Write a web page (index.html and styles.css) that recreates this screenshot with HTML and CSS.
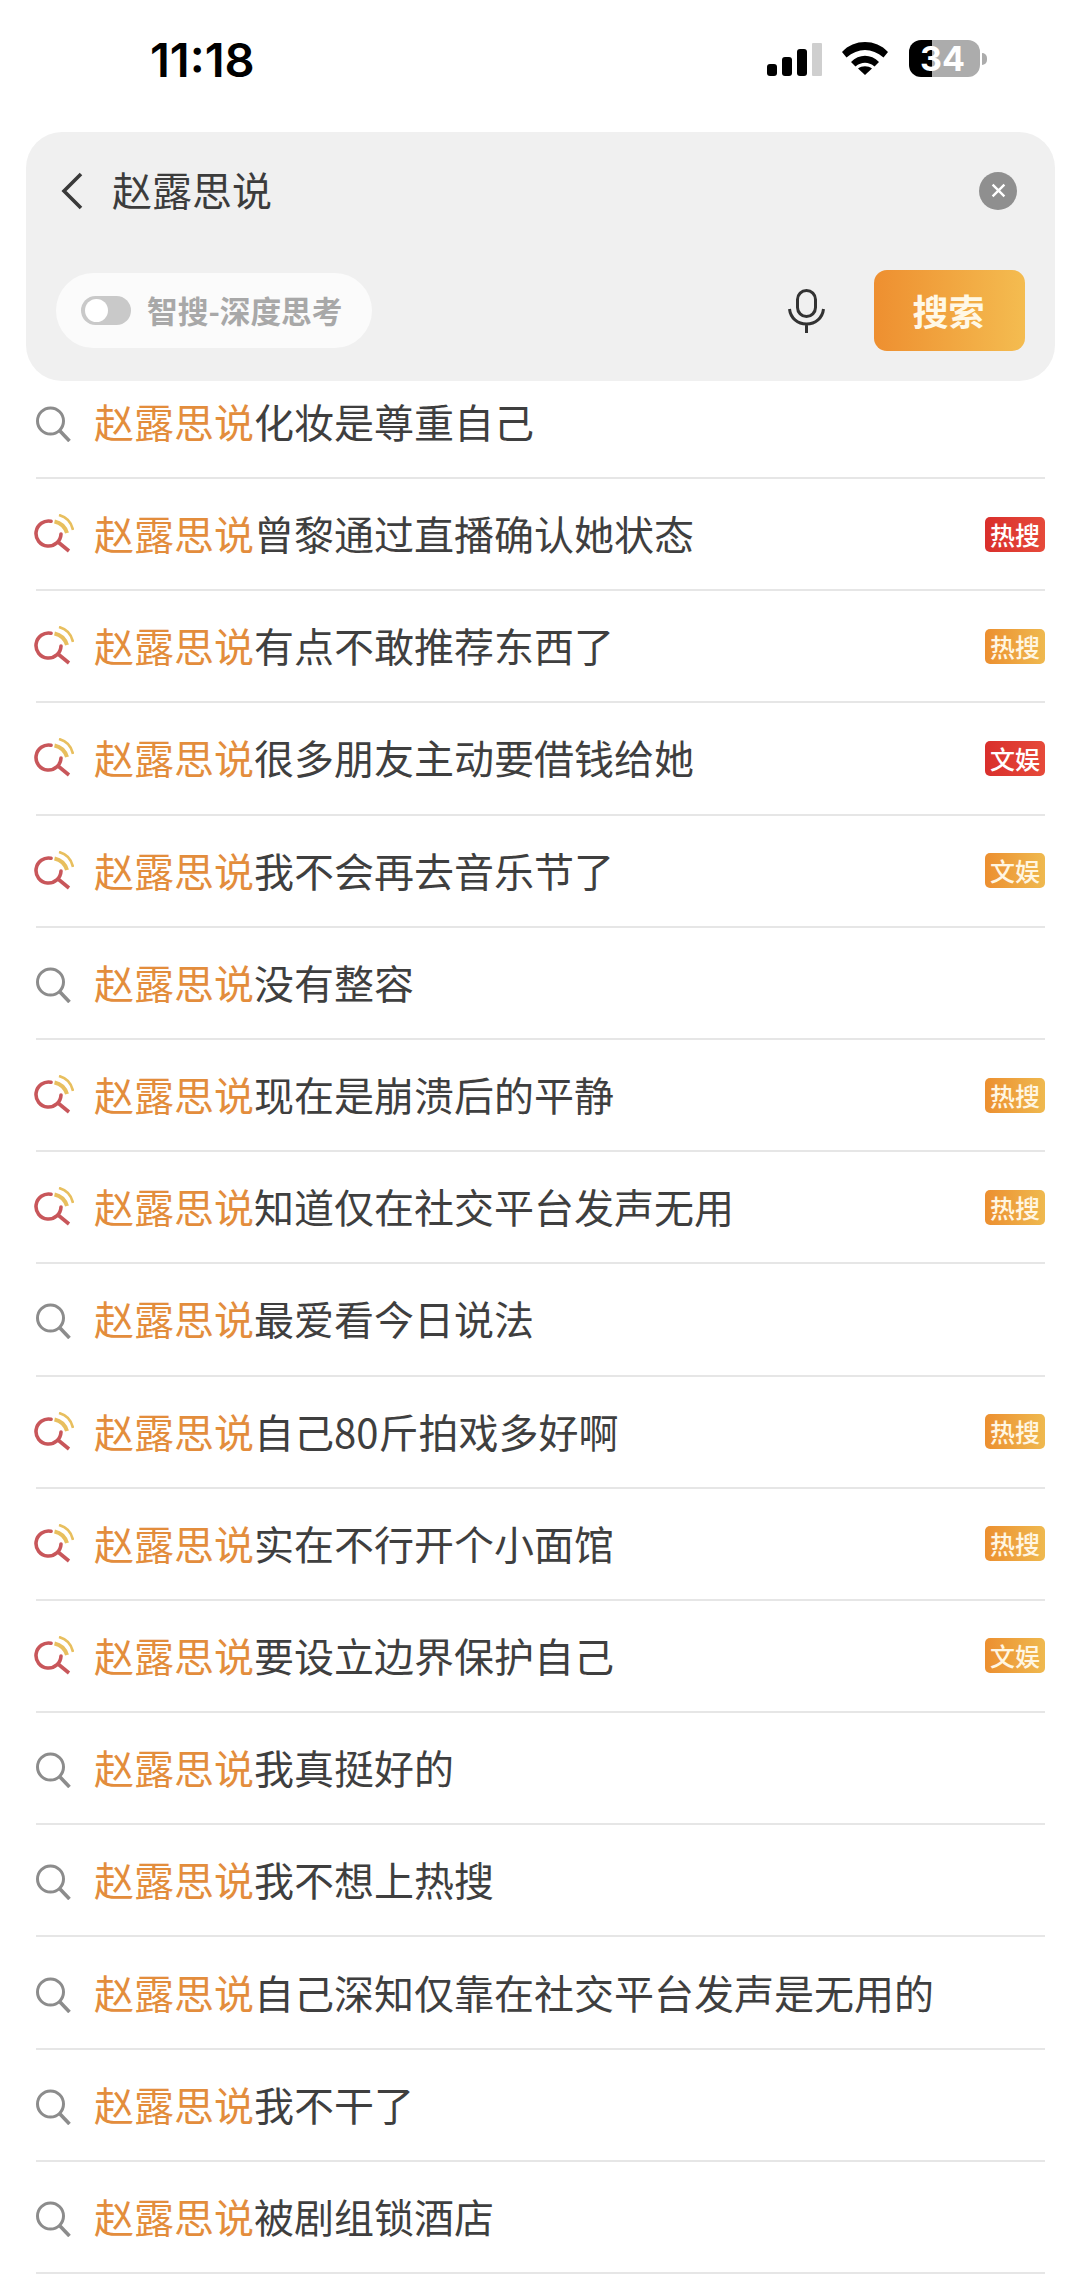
FILE: index.html
```html
<!DOCTYPE html>
<html lang="zh-CN">
<head>
<meta charset="utf-8">
<title>搜索</title>
<link rel="stylesheet" href="styles.css">
</head>
<body>
<svg class="defs" width="0" height="0" aria-hidden="true">
  <symbol id="plain" viewBox="0 0 40 40">
    <circle cx="16.5" cy="19" r="13" fill="none" stroke="#8c8c8c" stroke-width="3"/>
    <path d="M26 29 L35.5 39" fill="none" stroke="#8c8c8c" stroke-width="3.6"/>
  </symbol>
  <symbol id="hot" viewBox="0 0 40 40">
    <path d="M17 7.3 A12.5 12.5 0 1 0 27 20" fill="none" stroke="#c8565a" stroke-width="3.6" stroke-linecap="round"/>
    <path d="M24 28 L35 37" fill="none" stroke="#c8565a" stroke-width="3.6"/>
    <path d="M20.5 7.5 Q30 9.5 33 19" fill="none" stroke="#e8bf5e" stroke-width="4"/>
    <path d="M25 1 Q36.5 4 39 16" fill="none" stroke="#e8bf5e" stroke-width="2.6"/>
  </symbol>
</svg>

<header class="status">
  <span class="time">11:18</span>
  <div class="status-icons">
    <div class="signal"><i class="b1"></i><i class="b2"></i><i class="b3"></i><i class="b4"></i></div>
    <svg class="wifi" viewBox="0 0 46 33" aria-hidden="true">
      <path d="M0 10 C12 -3.3 34 -3.3 46 10 L41.5 15.5 C30 5.5 16 5.5 4.5 15.5 Z" fill="#000"/>
      <path d="M9 20 C17 11.5 29 11.5 37 20 L32.5 24.5 C26.5 19.5 19.5 19.5 13.5 24.5 Z" fill="#000"/>
      <path d="M23 33 L16 26.5 C20 23.5 26 23.5 30 26.5 Z" fill="#000"/>
    </svg>
    <div class="battery"><span>34</span></div>
    <i class="nub"></i>
  </div>
</header>

<section class="panel">
  <div class="query-row">
    <svg class="back" viewBox="0 0 24 38" aria-hidden="true"><path d="M22 2 L5 19 L22 36" fill="none" stroke="#3a3a3a" stroke-width="3.6"/></svg>
    <span class="query">赵露思说</span>
    <span class="clear"><svg viewBox="0 0 14 14" aria-hidden="true"><path d="M1.5 1.5 L12.5 12.5 M12.5 1.5 L1.5 12.5" stroke="#fff" stroke-width="2.2"/></svg></span>
  </div>
  <div class="action-row">
    <div class="deep">
      <span class="toggle"><i></i></span>
      <span class="deep-text">智搜-深度思考</span>
    </div>
    <svg class="mic" viewBox="0 0 37 44" aria-hidden="true">
      <rect x="9.5" y="1.5" width="18" height="26" rx="9" fill="none" stroke="#333" stroke-width="3"/>
      <path d="M1.5 20 C2.5 29 9.5 35 18.5 35 C27.5 35 34.5 29 35.5 20 M18.5 35 V44" fill="none" stroke="#333" stroke-width="3"/>
    </svg>
    <button class="go">搜索</button>
  </div>
</section>

<ul class="list">
  <li class="row"><svg class="ic"><use href="#plain"/></svg><span class="t"><em>赵露思说</em>化妆是尊重自己</span></li>
  <li class="row"><svg class="ic"><use href="#hot"/></svg><span class="t"><em>赵露思说</em>曾黎通过直播确认她状态</span><b class="tag red">热搜</b></li>
  <li class="row"><svg class="ic"><use href="#hot"/></svg><span class="t"><em>赵露思说</em>有点不敢推荐东西了</span><b class="tag amber">热搜</b></li>
  <li class="row"><svg class="ic"><use href="#hot"/></svg><span class="t"><em>赵露思说</em>很多朋友主动要借钱给她</span><b class="tag red">文娱</b></li>
  <li class="row"><svg class="ic"><use href="#hot"/></svg><span class="t"><em>赵露思说</em>我不会再去音乐节了</span><b class="tag amber">文娱</b></li>
  <li class="row"><svg class="ic"><use href="#plain"/></svg><span class="t"><em>赵露思说</em>没有整容</span></li>
  <li class="row"><svg class="ic"><use href="#hot"/></svg><span class="t"><em>赵露思说</em>现在是崩溃后的平静</span><b class="tag amber">热搜</b></li>
  <li class="row"><svg class="ic"><use href="#hot"/></svg><span class="t"><em>赵露思说</em>知道仅在社交平台发声无用</span><b class="tag amber">热搜</b></li>
  <li class="row"><svg class="ic"><use href="#plain"/></svg><span class="t"><em>赵露思说</em>最爱看今日说法</span></li>
  <li class="row"><svg class="ic"><use href="#hot"/></svg><span class="t"><em>赵露思说</em>自己80斤拍戏多好啊</span><b class="tag amber">热搜</b></li>
  <li class="row"><svg class="ic"><use href="#hot"/></svg><span class="t"><em>赵露思说</em>实在不行开个小面馆</span><b class="tag amber">热搜</b></li>
  <li class="row"><svg class="ic"><use href="#hot"/></svg><span class="t"><em>赵露思说</em>要设立边界保护自己</span><b class="tag amber">文娱</b></li>
  <li class="row"><svg class="ic"><use href="#plain"/></svg><span class="t"><em>赵露思说</em>我真挺好的</span></li>
  <li class="row"><svg class="ic"><use href="#plain"/></svg><span class="t"><em>赵露思说</em>我不想上热搜</span></li>
  <li class="row"><svg class="ic"><use href="#plain"/></svg><span class="t"><em>赵露思说</em>自己深知仅靠在社交平台发声是无用的</span></li>
  <li class="row"><svg class="ic"><use href="#plain"/></svg><span class="t"><em>赵露思说</em>我不干了</span></li>
  <li class="row"><svg class="ic"><use href="#plain"/></svg><span class="t"><em>赵露思说</em>被剧组锁酒店</span></li>
</ul>
</body>
</html>
```
FILE: styles.css
```css
* { box-sizing: border-box; }
html, body { margin: 0; padding: 0; }
body {
  width: 1080px;
  height: 2275px;
  overflow: hidden;
  background: #fff;
  font-family: "Noto Sans CJK SC", "Noto Sans", sans-serif;
}
.defs { position: absolute; }

.status {
  height: 132px;
  display: flex;
  align-items: flex-start;
  justify-content: space-between;
  padding: 40px 93px 0 150px;
}
.time {
  font-family: Inter, "Liberation Sans", sans-serif;
  font-weight: 600;
  font-size: 47px;
  line-height: 40px;
  color: #000;
}
.status-icons { display: flex; align-items: flex-start; }
.signal { display: flex; align-items: flex-end; gap: 5px; height: 36px; }
.signal i { display: block; width: 10px; background: #000; border-radius: 3px; }
.signal .b1 { height: 12px; }
.signal .b2 { height: 19px; }
.signal .b3 { height: 27px; }
.signal .b4 { height: 33px; background: #cfcfcf; border-radius: 1px; }
.wifi { width: 46px; height: 33px; margin: 2px 0 0 20px; }
.battery {
  width: 71px;
  height: 37px;
  margin-left: 21px;
  border-radius: 12px;
  background: linear-gradient(90deg, #000 0 32.4%, #acacac 32.4% 100%);
  display: flex;
  align-items: center;
  justify-content: center;
}
.battery span {
  font-family: Inter, "Liberation Sans", sans-serif;
  font-weight: 700;
  font-size: 34px;
  line-height: 37px;
  color: #fff;
  padding-right: 4px;
}
.nub {
  width: 5px;
  height: 12px;
  margin: 13px 0 0 2px;
  background: #acacac;
  border-radius: 0 6px 6px 0;
}

.panel {
  position: relative;
  z-index: 1;
  width: 1029px;
  height: 249px;
  margin-left: 26px;
  background: #f0f0f0;
  border-radius: 36px;
  padding: 0 30px;
}
.query-row { display: flex; align-items: center; height: 117px; }
.back { width: 24px; height: 38px; margin-left: 3px; }
.query { font-size: 40px; line-height: 50px; color: #3c3c3c; margin-left: 29px; padding-bottom: 3px; }
.clear {
  margin-left: auto;
  margin-right: 8px;
  width: 38px;
  height: 38px;
  border-radius: 50%;
  background: #8f8f8f;
  display: flex;
  align-items: center;
  justify-content: center;
}
.clear svg { width: 15px; height: 15px; }
.action-row { display: flex; align-items: center; height: 81px; margin-top: 21px; }
.deep {
  width: 316px;
  height: 75px;
  border-radius: 38px;
  background: #fbfbfb;
  display: flex;
  align-items: center;
  padding-left: 25px;
}
.toggle {
  width: 50px;
  height: 29px;
  border-radius: 15px;
  background: #c9c9c9;
  padding: 3px 4px;
  display: block;
}
.toggle i { display: block; width: 23px; height: 23px; border-radius: 50%; background: #fff; }
.deep-text { margin-left: 16px; font-size: 30.7px; font-weight: 700; line-height: 40px; color: #a8a8a8; white-space: nowrap; padding-bottom: 2px; }
.mic { width: 37px; height: 44px; margin-left: auto; margin-right: 49px; }
.go {
  width: 151px;
  height: 81px;
  border: 0;
  border-radius: 13px;
  background: linear-gradient(90deg, #ee8f30, #f4bc50);
  color: #fff8e6;
  font-family: inherit;
  font-size: 36px;
  font-weight: 700;
  padding: 0 2px 2px 0;
}

.list { list-style: none; margin: -14.2px 35px 0 36px; padding: 0; }
.row {
  height: 112.2px;
  display: flex;
  align-items: center;
  border-bottom: 2px solid #e6e6e6;
}
.ic { width: 40px; height: 40px; margin-left: -2px; flex: none; }
.t { margin-left: 20px; font-size: 40px; line-height: 56px; color: #3f3f3f; white-space: nowrap; padding-bottom: 2px; }
.t em { font-style: normal; color: #e38d3c; }
.tag {
  margin-left: auto;
  width: 60px;
  height: 35px;
  border-radius: 5px;
  font-size: 25px;
  font-weight: 500;
  line-height: 35px;
  text-align: center;
  color: #fff;
}
.tag.red { background: linear-gradient(90deg, #d92f2c, #e64a3a); }
.tag.amber { background: linear-gradient(90deg, #ec8f30, #efb94f); color: #fff6e2; }
```
